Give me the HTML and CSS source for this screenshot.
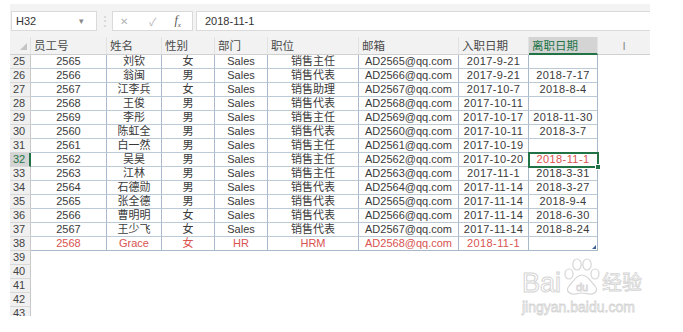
FILE: index.html
```html
<!DOCTYPE html>
<html lang="zh-CN">

<head>
    <meta charset="UTF-8">
    <meta name="viewport" content="width=device-width, initial-scale=1.0">
    <title>员工表</title>
    <link rel="stylesheet" href="styles.css">
</head>

<body>
    <div class="app">
        <!-- formula bar -->
        <div class="toolbar">
            <div class="namebox"><span>H32</span><span class="caret">&#9662;</span></div>
            <div class="grip">&#8942;</div>
            <div class="fx-buttons">
                <span class="btn-x">&#10005;</span>
                <span class="btn-ok">&#10003;</span>
                <span class="btn-fx">f<sub>x</sub></span>
            </div>
            <div class="formula">2018-11-1</div>
        </div>

        <!-- sheet -->
        <div class="sheet">
            <div class="row head">
                <div class="corner"><span class="tri"></span></div>
                <div class="hc">员工号</div>
                <div class="hc">姓名</div>
                <div class="hc">性别</div>
                <div class="hc">部门</div>
                <div class="hc">职位</div>
                <div class="hc">邮箱</div>
                <div class="hc">入职日期</div>
                <div class="hc active">离职日期</div>
                <div class="hc letter">I</div>
            </div>

            <div class="row"><div class="rh">25</div><div class="c">2565</div><div class="c">刘钦</div><div class="c">女</div><div class="c">Sales</div><div class="c">销售主任</div><div class="c">AD2565@qq.com</div><div class="c d">2017-9-21</div><div class="c d"></div></div>
            <div class="row"><div class="rh">26</div><div class="c">2566</div><div class="c">翁闽</div><div class="c">男</div><div class="c">Sales</div><div class="c">销售代表</div><div class="c">AD2566@qq.com</div><div class="c d">2017-9-21</div><div class="c d">2018-7-17</div></div>
            <div class="row"><div class="rh">27</div><div class="c">2567</div><div class="c">江李兵</div><div class="c">女</div><div class="c">Sales</div><div class="c">销售助理</div><div class="c">AD2567@qq.com</div><div class="c d">2017-10-7</div><div class="c d">2018-8-4</div></div>
            <div class="row"><div class="rh">28</div><div class="c">2568</div><div class="c">王俊</div><div class="c">男</div><div class="c">Sales</div><div class="c">销售代表</div><div class="c">AD2568@qq.com</div><div class="c d">2017-10-11</div><div class="c d"></div></div>
            <div class="row"><div class="rh">29</div><div class="c">2569</div><div class="c">李彤</div><div class="c">男</div><div class="c">Sales</div><div class="c">销售主任</div><div class="c">AD2569@qq.com</div><div class="c d">2017-10-17</div><div class="c d">2018-11-30</div></div>
            <div class="row"><div class="rh">30</div><div class="c">2560</div><div class="c">陈虹全</div><div class="c">男</div><div class="c">Sales</div><div class="c">销售代表</div><div class="c">AD2560@qq.com</div><div class="c d">2017-10-11</div><div class="c d">2018-3-7</div></div>
            <div class="row"><div class="rh">31</div><div class="c">2561</div><div class="c">白一然</div><div class="c">男</div><div class="c">Sales</div><div class="c">销售主任</div><div class="c">AD2561@qq.com</div><div class="c d">2017-10-19</div><div class="c d"></div></div>
            <div class="row"><div class="rh active">32</div><div class="c">2562</div><div class="c">吴昊</div><div class="c">男</div><div class="c">Sales</div><div class="c">销售主任</div><div class="c">AD2562@qq.com</div><div class="c d">2017-10-20</div><div class="c d red selected">2018-11-1</div></div>
            <div class="row"><div class="rh">33</div><div class="c">2563</div><div class="c">江林</div><div class="c">男</div><div class="c">Sales</div><div class="c">销售主任</div><div class="c">AD2563@qq.com</div><div class="c d">2017-11-1</div><div class="c d">2018-3-31</div></div>
            <div class="row"><div class="rh">34</div><div class="c">2564</div><div class="c">石德勋</div><div class="c">男</div><div class="c">Sales</div><div class="c">销售代表</div><div class="c">AD2564@qq.com</div><div class="c d">2017-11-14</div><div class="c d">2018-3-27</div></div>
            <div class="row"><div class="rh">35</div><div class="c">2565</div><div class="c">张全德</div><div class="c">男</div><div class="c">Sales</div><div class="c">销售代表</div><div class="c">AD2565@qq.com</div><div class="c d">2017-11-14</div><div class="c d">2018-9-4</div></div>
            <div class="row"><div class="rh">36</div><div class="c">2566</div><div class="c">曹明明</div><div class="c">女</div><div class="c">Sales</div><div class="c">销售代表</div><div class="c">AD2566@qq.com</div><div class="c d">2017-11-14</div><div class="c d">2018-6-30</div></div>
            <div class="row"><div class="rh">37</div><div class="c">2567</div><div class="c">王少飞</div><div class="c">女</div><div class="c">Sales</div><div class="c">销售代表</div><div class="c">AD2567@qq.com</div><div class="c d">2017-11-14</div><div class="c d">2018-8-24</div></div>
            <div class="row new"><div class="rh">38</div><div class="c">2568</div><div class="c">Grace</div><div class="c">女</div><div class="c">HR</div><div class="c">HRM</div><div class="c">AD2568@qq.com</div><div class="c d">2018-11-1</div><div class="c d last"></div></div>
            <div class="row"><div class="rh">39</div></div>
            <div class="row"><div class="rh">40</div></div>
            <div class="row"><div class="rh">41</div></div>
            <div class="row"><div class="rh">42</div></div>
            <div class="row"><div class="rh">43</div></div>
        </div>
    </div>

    <!-- watermark -->
    <div class="watermark">
        <div class="logo">
            <span class="bai">Bai</span>
            <span class="paw">
                <svg width="40" height="38" viewBox="0 0 40 38">
                    <ellipse cx="7" cy="16" rx="4" ry="5" fill="none" stroke="#d6d6d6" stroke-width="1.2" />
                    <ellipse cx="15" cy="6.5" rx="4.2" ry="5.5" fill="none" stroke="#d6d6d6" stroke-width="1.2" />
                    <ellipse cx="25" cy="6.5" rx="4.2" ry="5.5" fill="none" stroke="#d6d6d6" stroke-width="1.2" />
                    <ellipse cx="33" cy="16" rx="4" ry="5" fill="none" stroke="#d6d6d6" stroke-width="1.2" />
                    <path d="M20 17 C 14 17, 11 24, 7 28 C 3 33, 8 37, 13 36 C 16 35.5, 18 35, 20 35 C 22 35, 24 35.5, 27 36 C 32 37, 37 33, 33 28 C 29 24, 26 17, 20 17 Z" fill="none" stroke="#d6d6d6" stroke-width="1.2" />
                    <text x="20" y="33" text-anchor="middle" font-family="Liberation Sans, sans-serif" font-size="11" fill="#fff" stroke="#d6d6d6" stroke-width="0.8">du</text>
                </svg>
            </span>
            <span class="jy">经验</span>
        </div>
        <div class="site">jingyan.baidu.com</div>
    </div>
</body>

</html>
```

FILE: styles.css
```css
/* General */
body {
    margin: 0;
    background: #fff;
    font-family: "Liberation Sans", "Noto Sans CJK SC", sans-serif;
    font-size: 11px;
    color: #3a3a3a;
}

.app {
    width: 640px;
    margin: 4px 0 0 10px;
}

/* Formula bar */
.toolbar {
    display: flex;
    align-items: flex-start;
    height: 33px;
    padding-top: 7px;
    box-sizing: border-box;
    background: #f3f3f3;
}

.namebox {
    display: flex;
    align-items: center;
    justify-content: space-between;
    width: 86px;
    height: 20px;
    margin-left: 1px;
    padding: 0 12px 0 4px;
    box-sizing: border-box;
    background: #fff;
    border: 1px solid #dadada;
    color: #333;
}

.caret {
    color: #888;
    font-size: 9px;
}

.grip {
    width: 15px;
    height: 20px;
    line-height: 20px;
    text-align: center;
    color: #cfcfcf;
    font-size: 12px;
}

.fx-buttons {
    display: flex;
    align-items: center;
    width: 81px;
    height: 20px;
    box-sizing: border-box;
    background: #fff;
    border: 1px solid #dadada;
}

.btn-x {
    margin-left: 7px;
    color: #b5b5b5;
    font-size: 10px;
}

.btn-ok {
    margin-left: 21px;
    color: #b5b5b5;
    font-size: 11px;
}

.btn-fx {
    margin-left: 18px;
    font-family: "Liberation Serif", serif;
    font-style: italic;
    font-size: 12px;
    color: #555;
}

.btn-fx sub {
    font-size: 7px;
}

.formula {
    flex: 1;
    height: 20px;
    margin-left: 3px;
    padding-left: 8px;
    line-height: 18px;
    box-sizing: border-box;
    background: #fff;
    border: 1px solid #dadada;
    border-right: none;
    color: #333;
}

/* Sheet grid */
.sheet {
    height: 279px;
    overflow: hidden;
}

.row {
    display: grid;
    grid-template-columns: 21px 76px 55px 53px 53px 91px 100px 70px 69px 52px;
    height: 14px;
}

.row > div {
    box-sizing: border-box;
    white-space: nowrap;
    overflow: hidden;
}

.head {
    height: 18px;
    background: #f2f2f2;
}

.head > div {
    border-bottom: 1px solid #d0d0d0;
    border-right: 1px solid #e2e2e2;
}

.corner {
    display: flex;
    align-items: flex-end;
    justify-content: flex-end;
    padding: 0 3px 4px 0;
}

.tri {
    width: 0;
    height: 0;
    border-left: 7px solid transparent;
    border-bottom: 7px solid #c4c4c4;
}

.hc {
    padding-left: 3px;
    line-height: 18px;
    font-size: 11.5px;
    color: #4a4a4a;
}

.hc.active {
    background: #d4d4d4;
    color: #217346;
    border-bottom: 2px solid #217346;
}

.hc.letter {
    text-align: center;
    padding-left: 0;
    color: #8a8a8a;
    border-right: none;
}

.rh {
    padding-left: 3px;
    line-height: 13px;
    background: #f0f0f0;
    border-right: 1px solid #c8c8c8;
    border-bottom: 1px solid #d8d8d8;
    color: #444;
}

.rh.active {
    background: #d4d4d4;
    color: #217346;
    border-right: 2px solid #217346;
}

.c {
    line-height: 13px;
    text-align: center;
    border-right: 1px solid #a8b9cb;
    border-bottom: 1px solid #bccad7;
}

.d {
    letter-spacing: 0.4px;
}

.red,
.new .c {
    color: #d9534f;
}

.new .c {
    border-bottom-color: #a8b9cb;
}

/* Active cell */
.selected {
    position: relative;
    overflow: visible !important;
    outline: 2px solid #217346;
    outline-offset: -1px;
}

.selected::after {
    content: "";
    position: absolute;
    right: -4px;
    bottom: -4px;
    width: 4px;
    height: 4px;
    background: #217346;
    border: 1px solid #fff;
}

.last {
    position: relative;
}

.last::after {
    content: "";
    position: absolute;
    right: 1px;
    bottom: 1px;
    border-left: 4px solid transparent;
    border-bottom: 4px solid #3d5f9a;
}

/* Watermark */
.watermark {
    position: absolute;
    left: 522px;
    top: 256px;
    width: 126px;
}

.logo {
    display: flex;
    align-items: flex-end;
    height: 40px;
}

.bai {
    font-size: 27px;
    line-height: 26px;
    color: #fff;
    -webkit-text-stroke: 1px #d4d4d4;
}

.paw {
    display: block;
    height: 38px;
    margin-left: 1px;
}

.jy {
    font-size: 20px;
    line-height: 26px;
    color: #fff;
    -webkit-text-stroke: 0.8px #d4d4d4;
}

.site {
    margin-top: 4px;
    font-size: 14px;
    line-height: 14px;
    color: #fff;
    -webkit-text-stroke: 0.8px #d4d4d4;
}
```
